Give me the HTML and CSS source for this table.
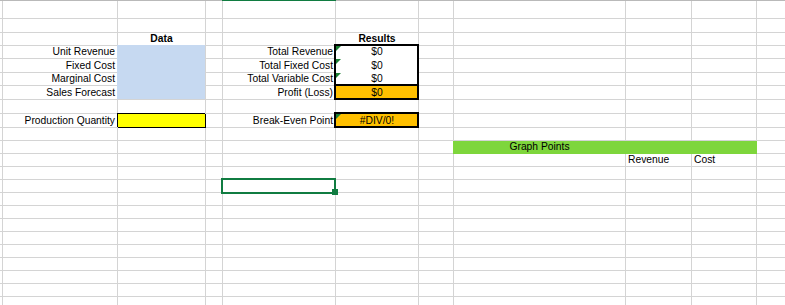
FILE: index.html
```html
<!DOCTYPE html>
<html>
<head>
<meta charset="utf-8">
<title>Break-Even Sheet</title>
<link rel="stylesheet" href="styles.css">
</head>
<body>
<div class="sheet">
  <!-- column header edge -->
  <div class="hd"></div><div class="hd"></div><div class="hd"></div><div class="hd"></div><div class="hd hd-sel"></div><div class="hd"></div><div class="hd"></div><div class="hd"></div><div class="hd"></div><div class="hd"></div><div class="hd"></div>
  <!-- row 1 -->
  <div></div><div></div><div></div><div></div><div></div><div></div><div></div><div></div><div></div><div></div><div></div>
  <!-- row 2 -->
  <div></div><div></div><div></div><div></div><div></div><div></div><div></div><div></div><div></div><div></div><div></div>
  <!-- row 3 -->
  <div></div><div></div><div class="ctr b">Data</div><div></div><div></div><div class="ctr b">Results</div><div></div><div></div><div></div><div></div><div></div>
  <!-- row 4 -->
  <div></div><div class="r">Unit Revenue</div><div class="blue"></div><div></div><div class="r">Total Revenue</div>
  <div class="res box">
    <div class="v tri">$0</div>
    <div class="v v14 tri">$0</div>
    <div class="v tri">$0</div>
  </div>
  <div></div><div></div><div></div><div></div><div></div>
  <!-- row 5 -->
  <div></div><div class="r">Fixed Cost</div><div></div><div class="r">Total Fixed Cost</div><div></div><div></div><div></div><div></div><div></div>
  <!-- row 6 -->
  <div></div><div class="r">Marginal Cost</div><div></div><div class="r">Total Variable Cost</div><div></div><div></div><div></div><div></div><div></div>
  <!-- row 7 -->
  <div></div><div class="r">Sales Forecast</div><div></div><div class="r">Profit (Loss)</div><div class="ctr org box">$0</div><div></div><div></div><div></div><div></div><div></div>
  <!-- row 8 -->
  <div></div><div></div><div></div><div></div><div></div><div></div><div></div><div></div><div></div><div></div><div></div>
  <!-- row 9 -->
  <div></div><div class="r">Production Quantity</div><div class="yellow"></div><div></div><div class="r">Break-Even Point</div><div class="ctr org box tri">#DIV/0!</div><div></div><div></div><div></div><div></div><div></div>
  <!-- row 10 -->
  <div></div><div></div><div></div><div></div><div></div><div></div><div></div><div></div><div></div><div></div><div></div>
  <!-- row 11 -->
  <div></div><div></div><div></div><div></div><div></div><div></div><div></div><div class="ctr g g-first">Graph Points</div><div class="g"></div><div class="g"></div><div></div>
  <!-- row 12 -->
  <div></div><div></div><div></div><div></div><div></div><div></div><div></div><div></div><div class="l">Revenue</div><div class="l">Cost</div><div></div>
  <!-- row 13 -->
  <div></div><div></div><div></div><div></div><div></div><div></div><div></div><div></div><div></div><div></div><div></div>
  <!-- row 14 -->
  <div></div><div></div><div></div><div></div><div class="sel"></div><div></div><div></div><div></div><div></div><div></div><div></div>
  <!-- row 15 -->
  <div></div><div></div><div></div><div></div><div></div><div></div><div></div><div></div><div></div><div></div><div></div>
  <!-- row 16 -->
  <div></div><div></div><div></div><div></div><div></div><div></div><div></div><div></div><div></div><div></div><div></div>
  <!-- row 17 -->
  <div></div><div></div><div></div><div></div><div></div><div></div><div></div><div></div><div></div><div></div><div></div>
  <!-- row 18 -->
  <div></div><div></div><div></div><div></div><div></div><div></div><div></div><div></div><div></div><div></div><div></div>
  <!-- row 19 -->
  <div></div><div></div><div></div><div></div><div></div><div></div><div></div><div></div><div></div><div></div><div></div>
  <!-- row 20 -->
  <div></div><div></div><div></div><div></div><div></div><div></div><div></div><div></div><div></div><div></div><div></div>
  <!-- row 21 -->
  <div></div><div></div><div></div><div></div><div></div><div></div><div></div><div></div><div></div><div></div><div></div>
  <!-- row 22 -->
  <div></div><div></div><div></div><div></div><div></div><div></div><div></div><div></div><div></div><div></div><div></div>
  <!-- row 23 -->
  <div></div><div></div><div></div><div></div><div></div><div></div><div></div><div></div><div></div><div></div><div></div>
</div>
</body>
</html>
```

FILE: styles.css
```css
html, body {
  margin: 0;
  padding: 0;
  background: #fff;
  overflow: hidden;
}

.sheet {
  display: grid;
  grid-template-columns: 3px 115px 88px 17px 113px 83px 35px 172px 66px 65px 40px;
  grid-template-rows: 1px 18px 14px 13px 13px 14px 13px 14px 14px 14px 13px 13px repeat(11, 13px) 13px;
  width: 796px;
  height: 305px;
  overflow: hidden;
  font-family: "Liberation Sans", Arial, sans-serif;
  font-size: 10.3px;
  color: #000;
}

.sheet > div {
  box-sizing: border-box;
  min-width: 0;
  border-right: 1px solid #d4d4d4;
  border-bottom: 1px solid #d4d4d4;
  display: flex;
  align-items: flex-end;
  line-height: 12px;
  white-space: nowrap;
}

.sheet > .hd {
  border: 0;
  background: #b9b9b9;
}

.sheet > .hd-sel {
  background: #107c41;
  box-shadow: -1px 0 0 #107c41;
}

.r {
  justify-content: flex-end;
  padding-right: 2px;
}

.l {
  padding-left: 2px;
}

.ctr {
  justify-content: center;
}

.b {
  font-weight: bold;
}

.sheet > .blue {
  grid-row: span 4;
  background: #c6d9f1;
  box-shadow: -1px -1px 0 #c6d9f1;
  position: relative;
  z-index: 1;
}

.sheet > .yellow {
  background: #ffff00;
  border-color: #000;
  box-shadow: -1px -1px 0 #000;
  position: relative;
  z-index: 1;
}

.box {
  position: relative;
  z-index: 2;
}

.box::before {
  content: "";
  position: absolute;
  left: -2px;
  top: -2px;
  right: -1px;
  bottom: -1px;
  border: 2px solid #000;
  pointer-events: none;
}

.sheet > .res {
  grid-row: span 3;
  flex-direction: column;
  align-items: stretch;
  border-bottom: 0;
  background: #fff;
}

.v {
  box-sizing: border-box;
  height: 13px;
  padding-bottom: 1px;
  display: flex;
  align-items: flex-end;
  justify-content: center;
  position: relative;
}

.v14 {
  height: 14px;
}

.tri::after {
  content: "";
  position: absolute;
  left: 0;
  top: 0;
  border-top: 5px solid #1d8035;
  border-right: 5px solid transparent;
}

.sheet > .org {
  background: #ffc000;
}

.sheet > .g {
  background: #7ed63c;
  border-color: #7ed63c;
}

.sheet > .g-first {
  box-shadow: -1px 0 0 #7ed63c;
}

.sheet > .sel {
  position: relative;
  z-index: 2;
}

.sel::before {
  content: "";
  position: absolute;
  left: -2px;
  top: -2px;
  right: -1px;
  bottom: -2px;
  border: 2px solid #107c41;
}

.sel::after {
  content: "";
  position: absolute;
  right: -3px;
  bottom: -3px;
  width: 6px;
  height: 6px;
  background: #107c41;
}
```
